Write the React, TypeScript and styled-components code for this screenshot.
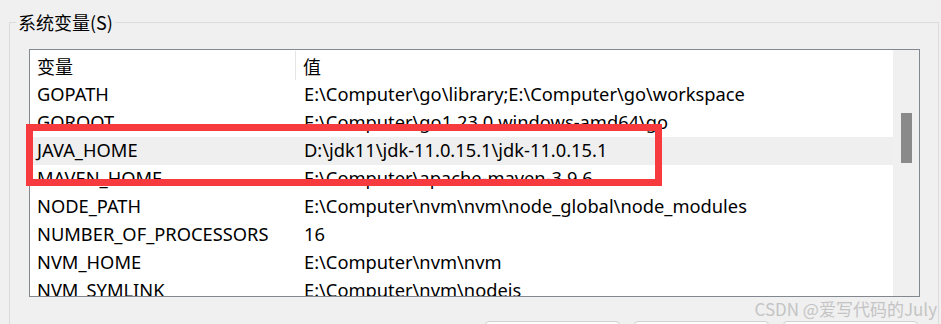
import React from "react";
import styled, { createGlobalStyle } from "styled-components";

const Global = createGlobalStyle`
  html, body { margin: 0; padding: 0; background: #f0f0f0; }
  body { font-family: "Noto Sans", "Noto Sans CJK SC", sans-serif; color: #000; }
`;

const Page = styled.div`
  position: relative;
  width: 941px;
  height: 324px;
  overflow: hidden;
  padding: 10px 2px 0 9px;
  box-sizing: border-box;
`;

const Group = styled.fieldset`
  margin: 0;
  padding: 15px 18px 20px 19px;
  border: 1px solid #dcdcdc;
  min-width: 0;
`;

const Legend = styled.legend`
  margin-left: -13px;
  padding: 0 2px;
  font-size: 18px;
  line-height: 24px;
  font-family: "Noto Sans CJK SC", sans-serif;
`;

const ListBox = styled.div`
  height: 248px;
  border: 1px solid #828790;
  background: #fff;
  display: flex;
  box-sizing: border-box;
  overflow: hidden;
`;

const Rows = styled.div`
  flex: 1;
  display: flex;
  flex-direction: column;
  overflow: hidden;
`;

const HeaderRow = styled.div`
  display: grid;
  grid-template-columns: 266px 1fr;
  height: 31px;
  flex: none;
  font-size: 18px;
  font-family: "Noto Sans CJK SC", sans-serif;
`;

const HeaderCell = styled.div<{ $divider?: boolean }>`
  padding: 0 7px;
  display: flex;
  align-items: center;
  border-right: ${(p) => (p.$divider ? "1px solid #e5e5e5" : "none")};
  margin: 1px 0;
`;

const Row = styled.div<{ $selected?: boolean }>`
  display: grid;
  grid-template-columns: 266px 1fr;
  height: 28px;
  box-sizing: border-box;
  padding-bottom: 2px;
  flex: none;
  align-items: center;
  font-size: 18.3px;
  line-height: 24px;
  white-space: nowrap;
  background: ${(p) => (p.$selected ? "#efefef" : "transparent")};
`;

const NameCell = styled.div`
  padding-left: 7px;
`;

const ValueCell = styled.div`
  padding-left: 8px;
`;

const ScrollTrack = styled.div`
  width: 26px;
  flex: none;
  background: #f0f0f0;
  padding: 63px 7px 0 8px;
  box-sizing: border-box;
`;

const Thumb = styled.div`
  width: 11px;
  height: 50px;
  background: #8a8a8a;
`;

const Buttons = styled.div`
  display: flex;
  justify-content: flex-end;
  gap: 14px;
  margin-top: 24px;
  padding-right: 2px;
`;

const Button = styled.div`
  width: 135px;
  height: 32px;
  box-sizing: border-box;
  border: 1px solid #d0d0d0;
  border-radius: 4px;
  background: #fdfdfd;
`;

const Highlight = styled.div`
  position: absolute;
  left: 26px;
  top: 124px;
  width: 636px;
  height: 62px;
  box-sizing: border-box;
  border: 7px solid #f73a3e;
  pointer-events: none;
`;

const Watermark = styled.div`
  position: absolute;
  right: 4px;
  top: 297px;
  font-size: 17px;
  line-height: 24px;
  color: #c4c4c4;
  font-family: "Noto Sans CJK SC", sans-serif;
  white-space: nowrap;
`;

const rows: [string, string][] = [
  ["GOPATH", "E:\\Computer\\go\\library;E:\\Computer\\go\\workspace"],
  ["GOROOT", "E:\\Computer\\go1.23.0.windows-amd64\\go"],
  ["JAVA_HOME", "D:\\jdk11\\jdk-11.0.15.1\\jdk-11.0.15.1"],
  ["MAVEN_HOME", "E:\\Computer\\apache-maven-3.9.6"],
  ["NODE_PATH", "E:\\Computer\\nvm\\nvm\\node_global\\node_modules"],
  ["NUMBER_OF_PROCESSORS", "16"],
  ["NVM_HOME", "E:\\Computer\\nvm\\nvm"],
  ["NVM_SYMLINK", "E:\\Computer\\nvm\\nodejs"],
];

export default function App() {
  return (
    <>
      <Global />
      <Page>
        <Group>
          <Legend>系统变量(S)</Legend>
          <ListBox>
            <Rows>
              <HeaderRow>
                <HeaderCell $divider>变量</HeaderCell>
                <HeaderCell>值</HeaderCell>
              </HeaderRow>
              {rows.map(([n, v]) => (
                <Row key={n} $selected={n === "JAVA_HOME"}>
                  <NameCell>{n}</NameCell>
                  <ValueCell>{v}</ValueCell>
                </Row>
              ))}
            </Rows>
            <ScrollTrack>
              <Thumb />
            </ScrollTrack>
          </ListBox>
          <Buttons>
            <Button />
            <Button />
            <Button />
          </Buttons>
        </Group>
        <Highlight />
        <Watermark>CSDN @爱写代码的July</Watermark>
      </Page>
    </>
  );
}
